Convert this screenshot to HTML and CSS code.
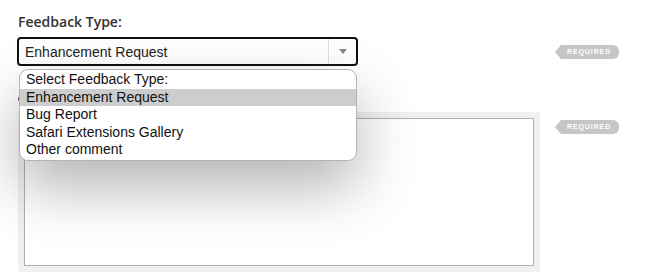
FILE: index.html
```html
<!DOCTYPE html>
<html>
<head>
<meta charset="utf-8">
<link rel="stylesheet" href="styles.css">
</head>
<body>
<form class="form">
  <div class="grid">
    <label class="label">Feedback Type:</label>
    <div></div>
    <div class="select">
      <span class="select-value">Enhancement Request</span>
      <span class="select-arrow"><span class="tri"></span></span>
    </div>
    <div class="badge badge-mid"><span class="badge-body">REQUIRED</span></div>
    <div class="label-spacer"><span class="peek"></span></div>
    <div></div>
    <div class="ta-wrap"><div class="textarea"></div></div>
    <div class="badge badge-top"><span class="badge-body">REQUIRED</span></div>
  </div>
  <ul class="dropdown">
    <li>Select Feedback Type:</li>
    <li class="sel">Enhancement Request</li>
    <li>Bug Report</li>
    <li>Safari Extensions Gallery</li>
    <li>Other comment</li>
  </ul>
</form>
</body>
</html>
```
FILE: styles.css
```css
html, body { margin: 0; padding: 0; background: #fff; }
body { width: 656px; height: 275px; overflow: hidden; font-family: "Liberation Sans", Arial, sans-serif; }
.form { position: relative; padding: 12px 0 0 17px; }
.grid { display: grid; grid-template-columns: 538px 64px; }
.label { font-family: "Open Sans", "Liberation Sans", sans-serif; font-weight: 600; font-size: 14px; line-height: 19px; color: #333; padding-left: 1px; }
.label-spacer { margin-top: 20px; height: 19px; display: flex; align-items: center; }
.peek { width: 4px; height: 6px; margin-left: 1px; margin-top: 7px; border-left: 2px solid #555; border-radius: 4px 0 0 4px; box-sizing: border-box; }
.select { margin-top: 6px; width: 341px; height: 29px; box-sizing: border-box; border: 2px solid #111; border-radius: 4px; display: flex; align-items: center; background: #fff; }
.select-value { flex: 1; padding-left: 6px; font-size: 14px; color: #222; }
.select-arrow { width: 27px; align-self: stretch; border-left: 1px solid #ddd; display: flex; align-items: center; justify-content: center; }
.tri { width: 0; height: 0; border-left: 4px solid transparent; border-right: 4px solid transparent; border-top: 5px solid #888; margin-left: 1px; }
.badge { display: flex; height: 14px; }
.badge::before { content: ""; width: 0; height: 0; border-top: 7px solid transparent; border-bottom: 7px solid transparent; border-right: 6px solid #c6c6c6; }
.badge-body { background: #c6c6c6; color: #fff; font-size: 7px; font-weight: bold; letter-spacing: 0.9px; line-height: 14px; padding: 0 0 0 6px; width: 58px; box-sizing: border-box; border-radius: 0 6px 6px 0; }
.badge-mid { align-self: center; margin-top: 6px; }
.badge-top { align-self: start; margin-top: 15px; }
.ta-wrap { margin-top: 7px; margin-left: 1px; width: 522px; box-sizing: border-box; padding: 6px; background: #f0f0f0; border-radius: 4px; }
.textarea { height: 148px; box-sizing: border-box; border: 1px solid #b0b0b0; background: #fff; }
.dropdown { position: absolute; left: 19px; top: 69px; width: 338px; box-sizing: border-box; margin: 0; padding: 1px 0; list-style: none; background: #fff; border: 1px solid #b4b4b4; border-radius: 9px; box-shadow: 0 26px 60px rgba(0,0,0,0.3); font-size: 14px; color: #111; }
.dropdown li { line-height: 17.5px; padding-left: 6px; }
.dropdown li.sel { background: #cdcdcd; }
```
